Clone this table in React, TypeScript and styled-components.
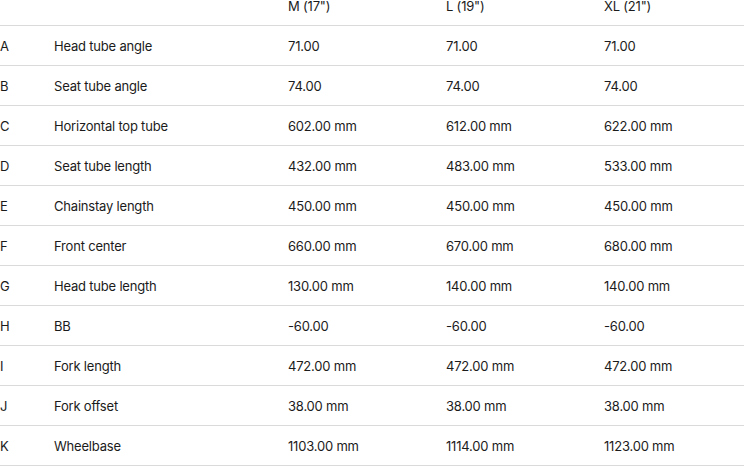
import React from "react";
import styled, { createGlobalStyle } from "styled-components";

const Global = createGlobalStyle`
  html, body { margin: 0; padding: 0; background: #ffffff; overflow: hidden; }
  body { font-family: Inter, "Noto Sans", sans-serif; color: #1b1b1b; }
`;

const Table = styled.div`
  width: 744px;
  margin-top: -14px;
  display: flex;
  flex-direction: column;
`;

const Row = styled.div`
  display: grid;
  grid-template-columns: 54px 234px 158px 158px 140px;
  height: 40px;
  align-items: center;
  border-bottom: 1px solid #dadada;
  box-sizing: border-box;
`;

const Cell = styled.div`
  font-size: 13px;
  line-height: 16px;
  white-space: nowrap;
  letter-spacing: -0.2px;
`;

const sizes = ['M (17")', 'L (19")', 'XL (21")'];

const rows: [string, string, string, string, string][] = [
  ["A", "Head tube angle", "71.00", "71.00", "71.00"],
  ["B", "Seat tube angle", "74.00", "74.00", "74.00"],
  ["C", "Horizontal top tube", "602.00 mm", "612.00 mm", "622.00 mm"],
  ["D", "Seat tube length", "432.00 mm", "483.00 mm", "533.00 mm"],
  ["E", "Chainstay length", "450.00 mm", "450.00 mm", "450.00 mm"],
  ["F", "Front center", "660.00 mm", "670.00 mm", "680.00 mm"],
  ["G", "Head tube length", "130.00 mm", "140.00 mm", "140.00 mm"],
  ["H", "BB", "-60.00", "-60.00", "-60.00"],
  ["I", "Fork length", "472.00 mm", "472.00 mm", "472.00 mm"],
  ["J", "Fork offset", "38.00 mm", "38.00 mm", "38.00 mm"],
  ["K", "Wheelbase", "1103.00 mm", "1114.00 mm", "1123.00 mm"],
];

export default function App() {
  return (
    <>
      <Global />
      <Table>
        <Row>
          <Cell />
          <Cell />
          {sizes.map((s) => (
            <Cell key={s}>{s}</Cell>
          ))}
        </Row>
        {rows.map((r) => (
          <Row key={r[0]}>
            {r.map((c, i) => (
              <Cell key={i}>{c}</Cell>
            ))}
          </Row>
        ))}
      </Table>
    </>
  );
}
